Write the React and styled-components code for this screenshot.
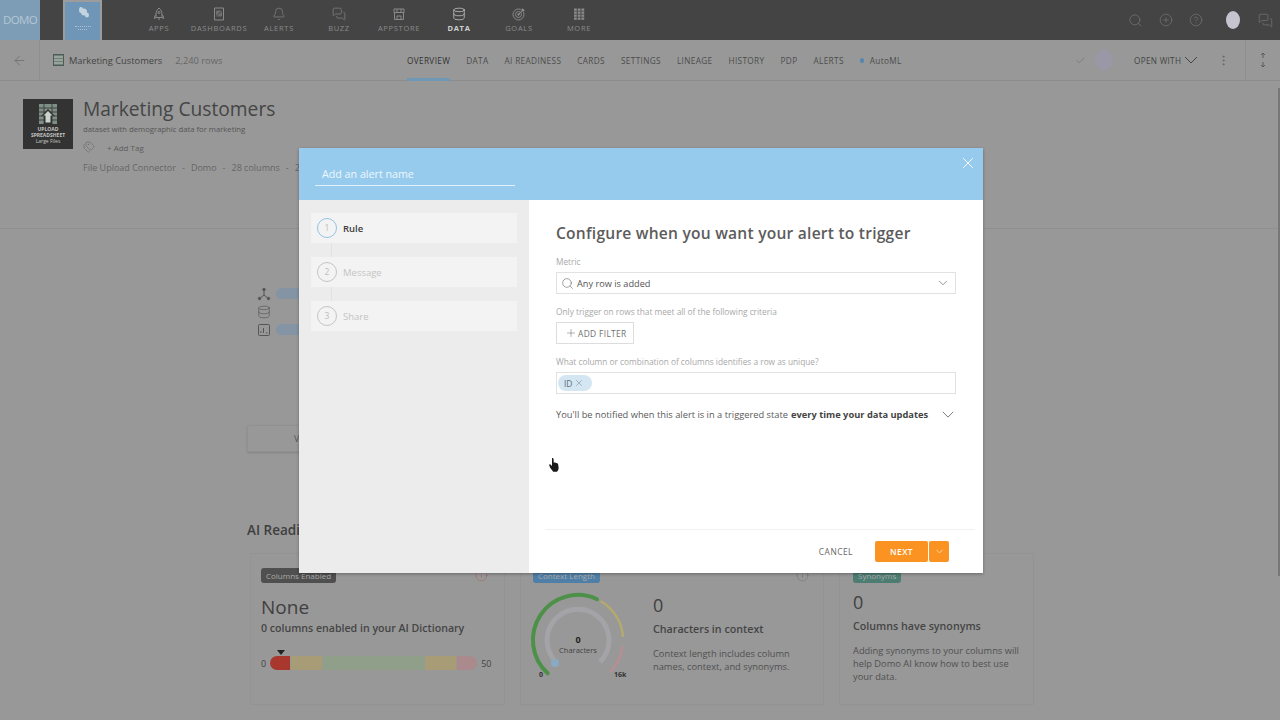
import React from 'react'
import styled, { createGlobalStyle } from 'styled-components'
import {
  ArrowLeft, Bell, Check, ChevronDown, CircleHelp, CirclePlus, Database, EllipsisVertical,
  Info, MessagesSquare, Plus, Search, Tags, X,
} from 'lucide-react'

const GlobalStyle = createGlobalStyle`
  html, body { margin: 0; padding: 0; height: 100%; overflow: hidden; }
  body { background: #989898; font-family: "Open Sans", "Liberation Sans", sans-serif; color: #444; }
  * { box-sizing: border-box; }
`

const RocketIcon = () => (
  <svg width="14" height="14" viewBox="0 0 14 14" fill="none" stroke="currentColor" strokeWidth="1">
    <path d="M7 1c2 1.500 3 4 3 6.500V10.500H4V7.500C4 5 5 2.500 7 1z" />
    <path d="M4 7.500L2.500 9.500V11.500L4 10.500M10 7.500l1.500 2V11.500L10 10.500M6 12h2" />
    <circle cx="7" cy="5.500" r="1" />
  </svg>
)
const BoardIcon = () => (
  <svg width="14" height="14" viewBox="0 0 14 14" fill="none" stroke="currentColor" strokeWidth="1">
    <path d="M2.500 1h9v12h-9z" />
    <path d="M4.500 4h5v5h-5z" fill="currentColor" opacity=".6" />
    <path d="M4.500 9l5-5" stroke="#444" />
  </svg>
)
const BellIcon = () => <Bell size={14} strokeWidth={1.1} />
const BuzzIcon = () => <MessagesSquare size={14} strokeWidth={1.1} />
const StoreIcon = () => (
  <svg width="14" height="14" viewBox="0 0 14 14" fill="none" stroke="currentColor" strokeWidth="1">
    <path d="M2 2h10v3.500H2zM2.500 5.500V12.500h9V5.500M5 12.500V9h4v3.500" />
    <path d="M5 2v3.500M9 2v3.500" />
  </svg>
)
const DataIconSvg = () => <Database size={14} strokeWidth={1.2} />
const GoalIcon = () => (
  <svg width="14" height="14" viewBox="0 0 14 14" fill="none" stroke="currentColor" strokeWidth="1">
    <circle cx="6.500" cy="7.500" r="5.500" />
    <circle cx="6.500" cy="7.500" r="3" />
    <circle cx="6.500" cy="7.500" r=".8" fill="currentColor" />
    <path d="M6.500 7.500L12 2M10.500 1.500V3.500H12.500" />
  </svg>
)
const GridIcon = () => (
  <svg width="14" height="14" viewBox="0 0 14 14" fill="currentColor">
    {[1.500, 4.500, 7.500, 10.500].map(y =>
      [2, 5.700, 9.400].map(x => <rect key={`${x}-${y}`} x={x} y={y} width="2.800" height="2.300" />)
    )}
  </svg>
)
const ShallowChevron = ({ width = 14, height = 8 }) => (
  <svg width={width} height={height} viewBox="0 0 14 8" fill="none" stroke="currentColor" strokeWidth="1" preserveAspectRatio="none">
    <path d="M1 1l6 6 6-6" />
  </svg>
)

const navItems = [
  { label: 'APPS', Icon: RocketIcon },
  { label: 'DASHBOARDS', Icon: BoardIcon },
  { label: 'ALERTS', Icon: BellIcon },
  { label: 'BUZZ', Icon: BuzzIcon },
  { label: 'APPSTORE', Icon: StoreIcon },
  { label: 'DATA', Icon: DataIconSvg, active: true },
  { label: 'GOALS', Icon: GoalIcon },
  { label: 'MORE', Icon: GridIcon },
]

const tabs = [
  { label: 'OVERVIEW', active: true },
  { label: 'DATA' },
  { label: 'AI READINESS' },
  { label: 'CARDS' },
  { label: 'SETTINGS' },
  { label: 'LINEAGE' },
  { label: 'HISTORY' },
  { label: 'PDP' },
  { label: 'ALERTS' },
]

const steps = [
  { n: 1, label: 'Rule', active: true },
  { n: 2, label: 'Message' },
  { n: 3, label: 'Share' },
]

const Page = styled.div`
  position: relative;
  width: 1280px;
  height: 720px;
  overflow: hidden;
`
const TopBar = styled.header`
  height: 40px;
  background: #444444;
  display: flex;
  align-items: stretch;
`
const Logo = styled.div`
  width: 40px;
  background: #7d9db6;
  color: #b4c6d4;
  font-size: 11.5px;
  line-height: 40px;
  letter-spacing: -0.6px;
  text-align: center;
  white-space: nowrap;
`
const Tile = styled.div`
  width: 39px;
  margin-left: 23px;
  background: #6f96b7;
  border: 2px solid #9c9c9c;
  border-top-width: 2px;
  border-bottom: none;
  display: flex;
  flex-direction: column;
  align-items: center;
  padding-top: 4px;
  gap: 2px;
`
const TileLine = styled.span`
  width: ${p => p.$w}px;
  border-top: 1px dotted #a9c2d6;
  margin-top: ${p => p.$top || 0}px;
`
const Nav = styled.nav`
  display: flex;
  margin-left: 27px;
`
const NavItem = styled.div`
  width: 60px;
  display: flex;
  flex-direction: column;
  align-items: center;
  padding-top: 7px;
  gap: 2px;
  color: ${p => (p.$active ? '#d0d0d0' : '#8a8a8a')};
  font-size: 7.5px;
  font-weight: ${p => (p.$active ? 700 : 400)};
  letter-spacing: 0.7px;
  line-height: 10px;
`
const TopIcons = styled.div`
  margin-left: auto;
  display: flex;
  align-items: center;
  padding-right: 7px;
  color: #777;
`
const TopIcon = styled.span`
  display: flex;
  margin-left: ${p => p.$gap}px;
`
const Avatar = styled.span`
  width: 14px;
  height: 18px;
  border-radius: 50%;
  background: #c6c4cf;
  margin-left: 23px;
`
const SubBar = styled.div`
  height: 41px;
  border-bottom: 1px solid #8c8c8c;
  display: flex;
  align-items: center;
`
const BackCell = styled.div`
  width: 40px;
  height: 100%;
  border-right: 1px solid #8f8f8f;
  display: flex;
  align-items: center;
  padding-left: 12px;
  color: #666;
  margin-right: 3px;
`
const DataIcon = styled.span`
  width: 11px;
  height: 12px;
  border: 1px solid #4d5c55;
  background: repeating-linear-gradient(0deg, #6e7f76 0 1px, #97a39c 1px 3px);
  margin: 0 5px 0 10px;
`
const SubTitle = styled.span`
  font-size: 9.3px;
  color: #444;
  white-space: nowrap;
`
const RowCount = styled.span`
  font-size: 9.3px;
  color: #666;
  margin-left: 13px;
  white-space: nowrap;
`
const Tabs = styled.div`
  position: absolute;
  left: 407px;
  top: 40px;
  height: 41px;
  display: flex;
  gap: 16px;
`
const Tab = styled.div`
  height: 100%;
  display: flex;
  align-items: center;
  gap: 4px;
  font-size: 8.25px;
  letter-spacing: 0.34px;
  color: ${p => (p.$active ? '#333' : '#4c4c4c')};
  border-bottom: ${p => (p.$active ? '3px solid #6f97b6' : 'none')};
  padding-top: ${p => (p.$active ? '3px' : '0')};
`
const Dot = styled.span`
  width: 4px;
  height: 5px;
  border-radius: 50%;
  background: #4f86b3;
  margin-right: 2px;
`
const SubRight = styled.div`
  margin-left: auto;
  height: 100%;
  display: flex;
  align-items: center;
  color: #5f5f5f;
`
const PurpleDot = styled.span`
  width: 18px;
  height: 20px;
  border-radius: 50%;
  background: #9a98a6;
  margin: 0 21px 0 9px;
`
const OpenWith = styled.span`
  display: flex;
  align-items: center;
  gap: 3px;
  font-size: 8.2px;
  letter-spacing: 0.3px;
  color: #444;
  width: 83px;
  white-space: nowrap;
`
const SortCell = styled.div`
  width: 35px;
  height: 100%;
  margin-left: 15px;
  border-left: 1px solid #8f8f8f;
  display: flex;
  align-items: center;
  justify-content: center;
  color: #555;
`
const DatasetHeader = styled.section`
  height: 148px;
  border-bottom: 1px solid #8f8f8f;
  display: flex;
  padding: 18px 0 0 23px;
  gap: 10px;
`
const Thumb = styled.div`
  width: 50px;
  height: 50px;
  background: #333;
  display: flex;
  flex-direction: column;
  align-items: center;
  padding-top: 4px;
  color: #c4c4c4;
  font-size: 5px;
  line-height: 5.8px;
  font-weight: 700;
  text-align: center;
  white-space: nowrap;
`
const ThumbArt = styled.span`
  display: flex;
  margin-bottom: 2px;
`
const ThumbLight = styled.span`
  font-weight: 400;
`
const DatasetInfo = styled.div`
  display: flex;
  flex-direction: column;
`
const DatasetTitle = styled.h1`
  margin: 0;
  font-size: 19.2px;
  font-weight: 400;
  line-height: 20px;
  color: #454545;
`
const DatasetDesc = styled.p`
  margin: 5px 0 0;
  font-size: 7.7px;
  line-height: 11px;
  color: #555;
`
const TagRow = styled.div`
  display: flex;
  align-items: center;
  gap: 12px;
  margin-top: 6px;
  height: 12px;
  font-size: 8px;
  color: #5c5c5c;
`
const MetaRow = styled.div`
  margin-top: 8px;
  font-size: 9px;
  line-height: 14px;
  color: #666;
  white-space: nowrap;
`
const MetaSep = styled.span`
  margin: 0 6px;
`
const Middle = styled.section`
  height: 292px;
  padding: 58px 0 0 257px;
  display: flex;
  flex-direction: column;
  gap: 5px;
  color: #555;
`
const StatRow = styled.div`
  display: flex;
  align-items: center;
  gap: 5px;
  height: 13px;
`
const StatPill = styled.span`
  width: 40px;
  height: 11px;
  border-radius: 6px;
  background: #8494a4;
`
const ViewButton = styled.div`
  width: 80px;
  height: 27px;
  margin: 84px 0 0 -10px;
  border: 1px solid #919191;
  border-radius: 2px;
  box-shadow: 0 1px 2px rgba(0,0,0,.15);
  font-size: 9px;
  line-height: 25px;
  padding-left: 46px;
  color: #555;
`
const AiHeading = styled.h2`
  margin: 0 0 0 247px;
  font-size: 13.5px;
  font-weight: 600;
  line-height: 18px;
  color: #3f3f3f;
`
const Cards = styled.section`
  margin: 14px 0 0 250px;
  display: grid;
  grid-template-columns: 255px 304px 195px;
  gap: 15px;
`
const Card = styled.article`
  height: 152px;
  border: 1px solid #939393;
  padding: ${p => p.$pad || '14px 10px 0'};
  display: flex;
  flex-direction: ${p => (p.$row ? 'row' : 'column')};
  position: relative;
`
const Badge = styled.span`
  align-self: flex-start;
  height: 15px;
  padding: 0 5px;
  border-radius: 3px;
  font-size: 8px;
  line-height: 15px;
  color: #ababab;
  background: ${p => p.$bg};
  white-space: nowrap;
`
const CardInfo = styled.span`
  position: absolute;
  top: 15px;
  right: ${p => p.$right}px;
  display: flex;
  color: ${p => p.$color};
`
const BigValue = styled.div`
  font-size: ${p => p.$size || 19}px;
  line-height: 24px;
  margin-top: ${p => p.$top || 0}px;
  color: #404040;
`
const CardLine = styled.div`
  font-size: 10.6px;
  font-weight: 600;
  line-height: 14px;
  margin-top: 2px;
  color: #454545;
  white-space: nowrap;
`
const CardHead = styled.div`
  font-size: 10.7px;
  font-weight: 600;
  line-height: 14px;
  margin-top: 5px;
  color: #454545;
  white-space: nowrap;
`
const CardText = styled.p`
  margin: 11px 0 0;
  font-size: 9.3px;
  line-height: 13px;
  color: #505050;
`
const ScaleRow = styled.div`
  display: flex;
  align-items: center;
  margin-top: 21px;
  font-size: 9px;
  color: #444;
  gap: 4px;
  position: relative;
`
const Scale = styled.div`
  flex: 0 0 207px;
  height: 14px;
  display: flex;
  gap: 1px;
`
const ScalePart = styled.span`
  flex: ${p => p.$grow} 0 0;
  background: ${p => p.$bg};
  border-radius: ${p => p.$radius || 0};
`
const Marker = styled.span`
  position: absolute;
  left: 16px;
  top: -6px;
  border: 4px solid transparent;
  border-top: 5px solid #222;
  border-bottom: none;
`
const GaugeWrap = styled.div`
  width: 120px;
  margin: 23px 11px 0 -11px;
  flex: none;
`
const Col = styled.div`
  display: flex;
  flex-direction: column;
  padding-top: 25px;
  width: 150px;
`
const CardColBadge = styled.div`
  position: absolute;
  left: 12px;
  top: 14px;
  display: flex;
`
const ScrollThumb = styled.span`
  position: absolute;
  right: 0;
  top: 88px;
  width: 2px;
  height: 488px;
  background: #777;
`

const Modal = styled.div`
  position: absolute;
  left: 299px;
  top: 148px;
  width: 684px;
  height: 425px;
  background: #fff;
  box-shadow: 0 1px 3px rgba(0,0,0,.3);
  display: flex;
  flex-direction: column;
`
const ModalHead = styled.div`
  height: 52px;
  flex: none;
  background: #97cbed;
  padding: 19px 0 0 16px;
  position: relative;
`
const NameInput = styled.div`
  width: 200px;
  height: 19px;
  border-bottom: 1px solid #dff0fa;
  padding-left: 7px;
  font-size: 10.7px;
  line-height: 15px;
  color: #eef7fc;
`
const CloseBtn = styled.span`
  position: absolute;
  right: 6px;
  top: 6px;
  display: flex;
  color: #fff;
`
const ModalBody = styled.div`
  flex: 1;
  display: flex;
  min-height: 0;
`
const StepCol = styled.aside`
  width: 230px;
  flex: none;
  background: #ececec;
  padding: 13px 12px;
  display: flex;
  flex-direction: column;
`
const Step = styled.div`
  height: 30px;
  background: #f3f3f3;
  display: flex;
  align-items: center;
  padding-left: 6px;
  gap: 6px;
  font-size: 9.5px;
  font-weight: ${p => (p.$active ? 600 : 400)};
  color: ${p => (p.$active ? '#3e3e3e' : '#c4c4c4')};
`
const StepLink = styled.span`
  width: 1px;
  height: 14px;
  margin-left: 20px;
  background: #e2e2e2;
`
const StepNum = styled.span`
  width: 20px;
  height: 20px;
  border-radius: 50%;
  border: ${p => (p.$active ? '1.5px solid #93c3e2' : '1px solid #c4c4c4')};
  font-size: 8.5px;
  font-weight: 400;
  line-height: 18px;
  text-align: center;
  color: #bcbcbc;
`
const RightCol = styled.div`
  flex: 1;
  display: flex;
  flex-direction: column;
  min-width: 0;
`
const Form = styled.div`
  flex: 1;
  padding: 23px 27px 0;
`
const FormTitle = styled.h3`
  margin: 0;
  font-size: 15.6px;
  font-weight: 600;
  line-height: 20px;
  letter-spacing: 0.22px;
  color: #5c5c5c;
  white-space: nowrap;
`
const Label = styled.div`
  font-size: 8.3px;
  line-height: 11px;
  color: #a8a8a8;
  margin-top: ${p => p.$top}px;
  white-space: nowrap;
`
const Field = styled.div`
  width: 400px;
  height: 22px;
  margin-top: 5px;
  border: 1px solid #e2e2e2;
  display: flex;
  align-items: center;
  padding: 0 5px 0 4px;
  gap: 3px;
  font-size: 9.2px;
  color: #555;
`
const FieldChevron = styled.span`
  margin-left: auto;
  display: flex;
  color: #666;
`
const AddFilter = styled.div`
  width: 78px;
  height: 22px;
  margin-top: 5px;
  border: 1px solid #ddd;
  display: flex;
  align-items: center;
  padding-left: 8px;
  gap: 1px;
  font-size: 8.4px;
  letter-spacing: 0.35px;
  color: #707070;
`
const Chip = styled.span`
  height: 16px;
  width: 34px;
  margin-left: -3px;
  background: #d3e6f1;
  border-radius: 8px;
  display: flex;
  align-items: center;
  padding-left: 6px;
  gap: 2px;
  font-size: 8.4px;
  color: #5c6c7c;
`
const NotifyRow = styled.div`
  margin-top: 14px;
  display: flex;
  align-items: center;
  width: 400px;
  font-size: 9.3px;
  line-height: 13px;
  color: #5a5a5a;
  white-space: nowrap;
  strong { font-weight: 700; color: #444; margin-left: 3px; }
`
const NotifyChevron = styled.span`
  margin-left: auto;
  margin-right: 2px;
  display: flex;
  color: #666;
`
const Footer = styled.div`
  height: 44px;
  flex: none;
  margin: 0 8px 0 16px;
  border-top: 1px solid #f1f1f1;
  display: flex;
  align-items: center;
  justify-content: flex-end;
  padding-right: 26px;
`
const CancelBtn = styled.span`
  font-size: 8.4px;
  letter-spacing: 0.5px;
  color: #666;
  margin-right: 22px;
`
const NextBtn = styled.span`
  width: 53px;
  height: 21px;
  background: #fb9322;
  border-radius: 2px;
  color: #fff;
  font-size: 8.4px;
  font-weight: 600;
  letter-spacing: 0.4px;
  line-height: 21px;
  text-align: center;
`
const NextArrow = styled.span`
  width: 20px;
  height: 21px;
  margin-left: 1px;
  background: #fb9322;
  border-radius: 2px;
  color: #fff;
  display: flex;
  align-items: center;
  justify-content: center;
`
const Cursor = styled.span`
  position: absolute;
  left: 548px;
  top: 457px;
  display: flex;
`

function Gauge() {
  return (
    <GaugeWrap>
      <svg width="120" height="110" viewBox="0 0 120 110">
        <path d="M34 85 A31 31 0 1 1 78 85" fill="none" stroke="#a3a3a8" strokeWidth="5" />
        <path d="M25.700 96.300 A45 45 0 0 1 75 22.200" fill="none" stroke="#4c9147" strokeWidth="4" strokeLinecap="round" />
        <path d="M78.500 24 A45 45 0 0 1 101 60" fill="none" stroke="#b3aa6f" strokeWidth="2.500" />
        <path d="M100.500 69 A45 45 0 0 1 88 95" fill="none" stroke="#b68f94" strokeWidth="2.500" />
        <circle cx="33" cy="86" r="4" fill="#8aa9c2" />
        <text x="56" y="66" textAnchor="middle" fontSize="9" fontWeight="700" fill="#222">0</text>
        <text x="56" y="76" textAnchor="middle" fontSize="7.500" fill="#444">Characters</text>
        <text x="17" y="100" fontSize="7" fontWeight="700" fill="#333">0</text>
        <text x="92" y="100" fontSize="7" fontWeight="700" fill="#333">16k</text>
      </svg>
    </GaugeWrap>
  )
}

function App() {
  return (
    <Page>
      <GlobalStyle />
      <TopBar>
        <Logo>DOMO</Logo>
        <Tile>
          <svg width="14" height="13" viewBox="0 0 14 13" fill="#c3d3df">
            <ellipse cx="5" cy="4" rx="2" ry="3" />
            <ellipse cx="8" cy="6" rx="3" ry="3.500" />
            <ellipse cx="11" cy="9" rx="2" ry="2.500" />
          </svg>
          <TileLine $w={16} $top={5} />
          <TileLine $w={9} />
        </Tile>
        <Nav>
          {navItems.map(({ label, Icon, active }) => (
            <NavItem key={label} $active={active}>
              <Icon />
              <span>{label}</span>
            </NavItem>
          ))}
        </Nav>
        <TopIcons>
          <TopIcon><Search size={15} strokeWidth={1.1} /></TopIcon>
          <TopIcon $gap={16}><CirclePlus size={14} strokeWidth={1.1} /></TopIcon>
          <TopIcon $gap={16}><CircleHelp size={14} strokeWidth={1.1} /></TopIcon>
          <Avatar />
          <TopIcon $gap={18}><MessagesSquare size={15} strokeWidth={1.1} /></TopIcon>
        </TopIcons>
      </TopBar>

      <SubBar>
        <BackCell><ArrowLeft size={15} strokeWidth={1.1} /></BackCell>
        <DataIcon />
        <SubTitle>Marketing Customers</SubTitle>
        <RowCount>2,240 rows</RowCount>
        <SubRight>
          <Check size={11} strokeWidth={1} />
          <PurpleDot />
          <OpenWith>OPEN WITH <ShallowChevron /></OpenWith>
          <EllipsisVertical size={13} strokeWidth={1.4} />
          <SortCell>
            <svg width="8" height="16" viewBox="0 0 8 16" fill="none" stroke="currentColor" strokeWidth=".9">
              <path d="M4 1v5M2 3l2-2 2 2M4 10v5M2 13l2 2 2-2" />
            </svg>
          </SortCell>
        </SubRight>
      </SubBar>
      <Tabs>
        {tabs.map(t => <Tab key={t.label} $active={t.active}>{t.label}</Tab>)}
        <Tab><Dot />AutoML</Tab>
      </Tabs>

      <DatasetHeader>
        <Thumb>
          <ThumbArt>
            <svg width="20" height="22" viewBox="0 0 20 22">
              <path d="M1 1h18v20H1z" fill="#7d8f86" />
              <path d="M1 5h18M1 9h18M1 13h18M1 17h18M6 1v20M14 1v20" stroke="#333" strokeWidth=".8" />
              <path d="M10 6l7 7h-3v8H6v-8H3z" fill="#333" />
              <path d="M10 8l4.500 4.500h-2v7h-5v-7h-2z" fill="#c9d3cd" />
            </svg>
          </ThumbArt>
          <span>UPLOAD</span>
          <span>SPREADSHEET</span>
          <ThumbLight>Large Files</ThumbLight>
        </Thumb>
        <DatasetInfo>
          <DatasetTitle>Marketing Customers</DatasetTitle>
          <DatasetDesc>dataset with demographic data for marketing</DatasetDesc>
          <TagRow><Tags size={12} strokeWidth={1} /><span>+ Add Tag</span></TagRow>
          <MetaRow>
            File Upload Connector<MetaSep>-</MetaSep>Domo<MetaSep>-</MetaSep>28 columns<MetaSep>-</MetaSep>2
          </MetaRow>
        </DatasetInfo>
      </DatasetHeader>

      <Middle>
        <StatRow>
          <svg width="14" height="14" viewBox="0 0 14 14" fill="none" stroke="currentColor">
            <path d="M7 4v4L2.500 11.500M7 8l4.500 3.500" />
            <circle cx="7" cy="2.500" r="1.200" fill="currentColor" />
            <circle cx="2.500" cy="11.500" r="1.200" fill="currentColor" />
            <circle cx="11.500" cy="11.500" r="1.200" fill="currentColor" />
          </svg>
          <StatPill />
        </StatRow>
        <StatRow><Database size={14} strokeWidth={1.1} /></StatRow>
        <StatRow>
          <svg width="14" height="14" viewBox="0 0 14 14" fill="none" stroke="currentColor">
            <rect x="1.500" y="1.500" width="11" height="11" rx="1" />
            <path d="M4 10V8M6.500 10V5M9 10h1.500" />
          </svg>
          <StatPill />
        </StatRow>
        <ViewButton>V</ViewButton>
      </Middle>

      <AiHeading>AI Readiness</AiHeading>
      <Cards>
        <Card>
          <Badge $bg="#4f4f4f">Columns Enabled</Badge>
          <CardInfo $right={16} $color="#a5615b"><Info size={13} strokeWidth={1} /></CardInfo>
          <BigValue $top={12}>None</BigValue>
          <CardLine>0 columns enabled in your AI Dictionary</CardLine>
          <ScaleRow>
            <span>0</span>
            <Marker />
            <Scale>
              <ScalePart $grow={20} $bg="#a8372e" $radius="8px 0 0 8px" />
              <ScalePart $grow={31} $bg="#a89c76" />
              <ScalePart $grow={101} $bg="#909f8a" />
              <ScalePart $grow={31} $bg="#a89c76" />
              <ScalePart $grow={20} $bg="#aa8a8c" $radius="0 8px 8px 0" />
            </Scale>
            <span>50</span>
          </ScaleRow>
        </Card>
        <Card $row $pad="0 0 0 12px">
          <CardColBadge><Badge $bg="#4f7fa6">Context Length</Badge></CardColBadge>
          <CardInfo $right={14} $color="#6f6f6f"><Info size={13} strokeWidth={1} /></CardInfo>
          <Gauge />
          <Col>
            <BigValue $size={18} $top={14}>0</BigValue>
            <CardHead>Characters in context</CardHead>
            <CardText>Context length includes column names, context, and synonyms.</CardText>
          </Col>
        </Card>
        <Card $pad="14px 13px 0">
          <Badge $bg="#4d7c72">Synonyms</Badge>
          <BigValue $size={18} $top={7}>0</BigValue>
          <CardHead>Columns have synonyms</CardHead>
          <CardText>Adding synonyms to your columns will help Domo AI know how to best use your data.</CardText>
        </Card>
      </Cards>
      <ScrollThumb />

      <Modal>
        <ModalHead>
          <NameInput>Add an alert name</NameInput>
          <CloseBtn><X size={18} strokeWidth={1.2} /></CloseBtn>
        </ModalHead>
        <ModalBody>
          <StepCol>
            {steps.map((s, i) => (
              <React.Fragment key={s.n}>
                {i > 0 && <StepLink />}
                <Step $active={s.active}>
                  <StepNum $active={s.active}>{s.n}</StepNum>
                  {s.label}
                </Step>
              </React.Fragment>
            ))}
          </StepCol>
          <RightCol>
            <Form>
              <FormTitle>Configure when you want your alert to trigger</FormTitle>
              <Label $top={13}>Metric</Label>
              <Field>
                <Search size={13} strokeWidth={1} />
                Any row is added
                <FieldChevron><ChevronDown size={14} strokeWidth={1.2} /></FieldChevron>
              </Field>
              <Label $top={12}>Only trigger on rows that meet all of the following criteria</Label>
              <AddFilter><Plus size={12} strokeWidth={1.1} />ADD FILTER</AddFilter>
              <Label $top={12}>What column or combination of columns identifies a row as unique?</Label>
              <Field>
                <Chip>ID <X size={10} strokeWidth={1} /></Chip>
              </Field>
              <NotifyRow>
                You'll be notified when this alert is in a triggered state <strong>every time your data updates</strong>
                <NotifyChevron><ShallowChevron width={12} height={7} /></NotifyChevron>
              </NotifyRow>
            </Form>
            <Footer>
              <CancelBtn>CANCEL</CancelBtn>
              <NextBtn>NEXT</NextBtn>
              <NextArrow><ChevronDown size={11} strokeWidth={1.3} /></NextArrow>
            </Footer>
          </RightCol>
        </ModalBody>
      </Modal>

      <Cursor>
        <svg width="13" height="16" viewBox="0 0 13 16">
          <path d="M4 1.200c.6-.6 1.400-.2 1.500.6l.3 4 .5-.3c.5-.2 1 0 1.200.3.5-.2 1 0 1.200.4.6-.2 1.200.1 1.300.6l.6 3.400c.2 1.800-.5 3.300-1.600 4.600H5.200L2 10.500 1.200 8c-.1-.8.7-1.100 1.300-.6L4 9V1.200z" fill="#1a1a1a" />
        </svg>
      </Cursor>
    </Page>
  )
}

export default App
